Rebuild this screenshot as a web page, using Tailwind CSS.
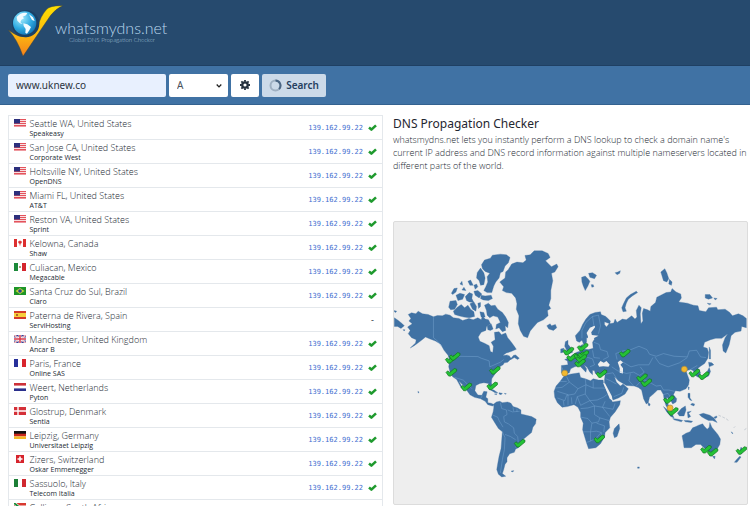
<!doctype html>
<html lang="en">
  <head>
    <meta charset="UTF-8" />
    <meta name="viewport" content="width=device-width, initial-scale=1.0" />
    <title>DNS Propagation Checker - whatsmydns.net</title>
    <script src="https://cdn.jsdelivr.net/npm/@tailwindcss/browser@4"></script>
  </head>
  <body class="bg-white font-['Open_Sans',sans-serif] text-[#232a33]">
    <!-- shared icons -->
    <svg class="hidden" aria-hidden="true">
      <symbol id="tick" viewBox="0 0 9 7">
        <path d="M1 3.6 3.4 5.6 8 1.4" fill="none" stroke="#1f9a2e" stroke-width="2.6" stroke-linejoin="round" />
      </symbol>
      <symbol id="pin" viewBox="-16 -13 32 26" overflow="visible">
        <path d="M-16 1 L-11 -4 L-5 1 L9 -11 L16 -9 L16 -3 L-2 12 L-8 12 Z" fill="#24c136" stroke="#11701f" stroke-width="2" stroke-linejoin="round" />
      </symbol>
      <symbol id="us" viewBox="0 0 12 8">
        <path fill="#f7dfe1" d="M0 0h12v8H0z" />
        <path stroke="#e4535c" d="M0 .5h12M0 2.5h12M0 4.5h12M0 6.5h12" />
        <path fill="#e4535c" d="M0 7.5h12V8H0z" />
        <path fill="#2c2f7c" d="M0 0h6v4.5H0z" />
      </symbol>
      <symbol id="ca" viewBox="0 0 12 8">
        <path fill="#fff" d="M0 0h12v8H0z" />
        <path fill="#dc2f2f" d="M0 0h3v8H0zM9 0h3v8H9zM6 1.2l.8 1 1.2.3-.6 1.8-1 .5v1.7h-.8V4.8l-1-.5L4 2.5l1.2-.3z" />
      </symbol>
      <symbol id="mx" viewBox="0 0 12 8">
        <path fill="#fff" d="M0 0h12v8H0z" />
        <path fill="#1c8a3a" d="M0 0h4v8H0z" />
        <path fill="#d4252d" d="M8 0h4v8H8z" />
        <circle cx="6" cy="4" r="1" fill="#8a7a4a" />
      </symbol>
      <symbol id="br" viewBox="0 0 12 8">
        <path fill="#1d9528" d="M0 0h12v8H0z" />
        <path fill="#c8d23a" d="M6 1l4.5 3L6 7 1.5 4z" />
        <circle cx="6" cy="4" r="1.8" fill="#23449a" />
      </symbol>
      <symbol id="es" viewBox="0 0 12 8">
        <path fill="#d43a2a" d="M0 0h12v8H0z" />
        <path fill="#f7cf3c" d="M0 2h12v4H0z" />
        <path fill="#b5642c" d="M2 3h2v2H2z" />
      </symbol>
      <symbol id="gb" viewBox="0 0 12 8">
        <path fill="#3a3f93" d="M0 0h12v8H0z" />
        <path stroke="#fff" stroke-width="1.6" d="M0 0l12 8M12 0L0 8" />
        <path stroke="#d8394a" stroke-width=".6" d="M0 0l12 8M12 0L0 8" />
        <path stroke="#fff" stroke-width="2.8" d="M6 0v8M0 4h12" />
        <path stroke="#d8394a" stroke-width="1.5" d="M6 0v8M0 4h12" />
      </symbol>
      <symbol id="fr" viewBox="0 0 12 8">
        <path fill="#fff" d="M0 0h12v8H0z" />
        <path fill="#27309a" d="M0 0h4v8H0z" />
        <path fill="#d8252d" d="M8 0h4v8H8z" />
      </symbol>
      <symbol id="nl" viewBox="0 0 12 8">
        <path fill="#fff" d="M0 0h12v8H0z" />
        <path fill="#cc3038" d="M0 0h12v2.6H0z" />
        <path fill="#2a2f8c" d="M0 5.4h12V8H0z" />
      </symbol>
      <symbol id="dk" viewBox="0 0 12 8">
        <path fill="#d43038" d="M0 0h12v8H0z" />
        <path stroke="#fff" stroke-width="1.4" d="M4 0v8M0 4h12" />
      </symbol>
      <symbol id="de" viewBox="0 0 12 8">
        <path fill="#111" d="M0 0h12v3H0z" />
        <path fill="#c8281e" d="M0 2.7h12v2.7H0z" />
        <path fill="#f3b825" d="M0 5.4h12V8H0z" />
      </symbol>
      <symbol id="ch" viewBox="0 0 12 8">
        <path fill="#d6242c" d="M2 0h8v8H2z" />
        <path stroke="#fff" stroke-width="1.6" d="M6 1.5v5M3.5 4h5" />
      </symbol>
      <symbol id="it" viewBox="0 0 12 8">
        <path fill="#fff" d="M0 0h12v8H0z" />
        <path fill="#1c7f36" d="M0 0h4v8H0z" />
        <path fill="#d0282f" d="M8 0h4v8H8z" />
      </symbol>
      <symbol id="za" viewBox="0 0 12 8">
        <path fill="#d8392f" d="M0 0h12v4H0z" />
        <path fill="#27309a" d="M0 4h12v4H0z" />
        <path stroke="#fff" stroke-width="3" fill="none" d="M0 0l5 4h7M0 8l5-4" />
        <path stroke="#1c8a3a" stroke-width="1.8" fill="none" d="M0 0l5 4h7M0 8l5-4" />
      </symbol>
    </svg>

    <header class="h-[66px] bg-[#264a6e] border-b border-[#1f4063] pl-2 pt-1">
      <a href="/" class="flex w-fit">
        <svg class="w-[56px] h-[54px]" viewBox="24 12 168 162" aria-hidden="true">
          <defs>
            <linearGradient id="gold" x1="0" y1="0" x2="0" y2="1">
              <stop offset="0" stop-color="#fde000" />
              <stop offset=".55" stop-color="#fdbb10" />
              <stop offset="1" stop-color="#f4801c" />
            </linearGradient>
            <radialGradient id="ocean" cx=".35" cy=".3" r=".8">
              <stop offset="0" stop-color="#a5ecfd" />
              <stop offset=".55" stop-color="#2fabe2" />
              <stop offset="1" stop-color="#0f6cae" />
            </radialGradient>
          </defs>
          <path d="M25 90 L40 100 Q58 113 80 110 Q106 102 114 80 Q120 50 140 28 Q150 16 188 17 Q166 27 152 46 Q118 96 69 169 Q52 118 25 90Z" fill="url(#gold)" stroke="#3c4440" stroke-width="1.5" />
          <circle cx="77" cy="71" r="41" fill="#1b4166" />
          <circle cx="74" cy="69" r="35" fill="url(#ocean)" />
          <path d="M50 51 Q64 35 82 39 L78 46 L68 50 L72 55 L64 59 L61 67 L68 72 L60 70 L52 62ZM70 70 L82 73 L93 81 L88 91 L81 101 L76 99 L77 87 L71 78ZM87 43 L99 52 L104 63 L96 60 L91 51Z" fill="#f2fbff" />
        </svg>
        <span class="flex flex-col pt-[15px] -ml-[9px] font-['Lato',sans-serif] font-light text-[#b9d6ec]">
          <span class="text-[16px] leading-[18px]">whatsmydns.net</span>
          <span class="text-[6px] leading-[6px] pl-[14px] text-[#a3c1da]">Global DNS Propagation Checker</span>
        </span>
      </a>
    </header>

    <form class="h-[39px] bg-[#4072a4] border-b border-[#33618f] flex items-center gap-[3px] pl-2 font-['Noto_Sans',sans-serif] text-[10px] text-[#2b3440]">
      <input type="text" aria-label="Domain name" value="www.uknew.co" class="w-[158px] h-[23px] rounded-xs bg-[#e8f0fe] px-2 text-[10px]" />
      <span class="relative">
        <select aria-label="Record type" class="block w-[59px] h-[23px] rounded-xs bg-white pl-2 appearance-none text-[#4a525c]">
          <option>A</option>
          <option>AAAA</option>
          <option>CNAME</option>
          <option>MX</option>
        </select>
        <svg class="absolute right-[6px] top-[9px] w-[6px] h-[6px] pointer-events-none" viewBox="0 0 6 6" aria-hidden="true">
          <path d="M.7 1.5 3 3.900 5.300 1.500" fill="none" stroke="#222" stroke-width="1.300" />
        </svg>
      </span>
      <button type="button" aria-label="Settings" class="w-[28px] h-[23px] rounded-xs bg-white grid place-items-center">
        <svg class="w-[10px] h-[10px]" viewBox="0 0 22 22" aria-hidden="true">
          <circle cx="11" cy="11" r="6" fill="none" stroke="#26323f" stroke-width="5" />
          <path d="M11 0v4M11 18v4M0 11h4M18 11h4M3 3l3 3M16 16l3 3M19 3l-3 3M6 16l-3 3" stroke="#26323f" stroke-width="4" />
        </svg>
      </button>
      <button type="submit" class="w-[64px] h-[23px] rounded-xs bg-[#ccdae9] flex items-center justify-center gap-1 font-semibold text-[#25405f]">
        <svg class="w-[13px] h-[13px]" viewBox="0 0 13 13" aria-hidden="true">
          <circle cx="6.500" cy="6.500" r="5" fill="none" stroke="#9fb0c2" stroke-width="2" />
          <path d="M6.500 1.500a5 5 0 0 1 3.500 8.500" fill="none" stroke="#4a6583" stroke-width="2" />
        </svg>
        Search
      </button>
    </form>

    <main class="grid grid-cols-[375fr_355fr] gap-[10px] items-start pl-2 pr-[2px] pt-[10px]">
      <table class="w-full border border-[#e4e8ec]">
        <tbody id="servers"></tbody>
      </table>

      <section>
        <h1 class="font-['Noto_Sans',sans-serif] text-[12px] leading-[18px] text-[#1f2630]">DNS Propagation Checker</h1>
        <p class="text-[9px] leading-[13px] font-light">
          whatsmydns.net lets you instantly perform a DNS lookup to check a domain name's current IP address and DNS record information against multiple nameservers located in different parts of the world.
        </p>
        <div class="mt-[49px] rounded-xs border border-[#dcdcdc] bg-[#eeeeee] overflow-hidden">
          <svg class="block w-full" viewBox="9 -57 1065 852" role="img" aria-label="World map of DNS servers">
            <g fill="#4072a4" stroke="#4072a4" stroke-width="1" stroke-linejoin="round">
              <!-- North America -->
              <path d="M52 222 L62 217 L75 220 L82 212 L95 220 L112 222 L128 229 L140 225 L155 226 L165 221 L178 224 L188 232 L205 234 L216 240 L235 234 L248 238 L262 232 L272 238 L276 226 L284 236 L294 238 L300 250 L288 258 L286 270 L272 276 L263 290 L268 303 L282 309 L296 316 L300 334 L307 337 L309 318 L302 306 L314 298 L312 276 L326 274 L333 283 L346 278 L352 292 L362 304 L372 318 L378 327 L362 334 L348 338 L337 346 L352 344 L350 352 L362 356 L352 366 L342 368 L338 374 L328 380 L320 393 L312 404 L304 416 L303 428 L306 444 L300 446 L294 430 L280 428 L268 430 L256 436 L253 452 L262 465 L274 466 L280 454 L290 455 L286 472 L292 476 L292 488 L302 490 L312 494 L306 498 L292 494 L284 484 L270 476 L252 472 L238 464 L228 450 L216 434 L204 422 L218 446 L212 444 L198 418 L186 410 L178 396 L174 380 L177 360 L172 345 L160 330 L150 312 L134 302 L118 296 L104 290 L94 298 L84 306 L70 316 L58 323 L74 308 L76 298 L62 292 L52 280 L58 270 L50 260 L64 250 L54 242 L60 234Z" />
              <path d="M344 350 L356 346 L362 354 L370 345 L376 344 L387 354 L382 358 L372 352 L362 358 L352 356Z" />
              <!-- Aleutians and eastern tip of Siberia -->
              <path d="M10 232 L22 240 L34 250 L40 256 L30 264 L20 258 L10 258ZM10 210 L17 212 L14 216 L10 214ZM36 268 L42 268 L40 272Z" />
              <!-- Arctic islands -->
              <path d="M273 72 L282 58 L300 52 L306 43 L330 40 L348 42 L359 50 L354 66 L344 76 L338 92 L330 96 L326 112 L316 124 L310 136 L304 156 L290 156 L280 150 L286 138 L292 124 L290 108 L298 98 L284 92 L276 84Z" />
              <path d="M260 96 L270 82 L280 96 L284 112 L280 132 L270 134 L266 120 L258 112Z" />
              <path d="M272 164 L284 166 L302 164 L306 174 L294 180 L278 178 L270 174Z" />
              <path d="M250 152 L262 150 L274 160 L266 172 L254 164Z" />
              <path d="M224 168 L236 156 L246 160 L244 174 L250 186 L236 184 L228 180Z" />
              <path d="M196 164 L208 158 L222 162 L216 176 L202 180Z" />
              <path d="M182 158 L190 144 L200 142 L196 154 L186 162ZM208 130 L214 122 L216 134ZM214 148 L220 140 L226 150ZM232 122 L240 118 L248 134 L238 134ZM250 134 L258 130 L262 138 L254 146Z" />
              <path d="M174 200 L178 182 L196 180 L200 192 L192 206 L180 208Z" />
              <path d="M188 212 L200 200 L212 192 L222 202 L232 194 L240 206 L250 214 L252 228 L236 232 L220 230 L204 226 L192 222Z" />
              <path d="M238 190 L250 184 L258 198 L256 212 L246 206ZM262 188 L270 186 L270 198 L264 204Z" />
              <path d="M282 194 L294 188 L302 196 L314 194 L322 206 L336 216 L346 230 L354 246 L352 262 L344 256 L346 270 L336 274 L326 262 L316 266 L318 252 L330 246 L322 230 L308 226 L298 232 L290 224 L288 210Z" />
              <path d="M290 256 L302 250 L308 266 L300 270 L292 268ZM268 214 L280 216 L284 230 L272 230Z" />
              <!-- Greenland, Iceland -->
              <path d="M328 124 L344 112 L346 94 L354 86 L364 70 L380 64 L398 66 L408 58 L404 44 L420 42 L432 30 L456 30 L474 38 L480 50 L466 60 L474 68 L484 78 L500 70 L504 78 L494 94 L484 98 L488 120 L482 150 L482 174 L476 194 L482 204 L472 210 L474 226 L460 238 L442 246 L430 260 L420 272 L412 292 L400 288 L390 270 L384 250 L386 226 L378 206 L380 190 L376 172 L364 158 L348 156 L336 150 L340 138Z" />
              <path d="M470 256 L480 250 L484 256 L496 252 L500 262 L490 270 L476 266Z" />
              <!-- Caribbean, Hawaii -->
              <path d="M294 446 L310 450 L322 458 L314 458ZM312 462 L320 461 L318 464ZM326 458 L336 460 L332 464 L326 462ZM342 460 L348 461 L344 463ZM81 454 L85 457 L82 459Z" />
              <!-- South America -->
              <path d="M310 492 L318 486 L328 484 L336 488 L352 486 L362 490 L368 500 L382 504 L392 510 L392 522 L408 526 L424 530 L438 538 L436 552 L428 562 L424 578 L412 588 L400 598 L394 612 L384 624 L376 628 L372 638 L358 642 L350 654 L350 666 L344 674 L340 690 L336 702 L346 710 L334 712 L324 704 L319 690 L322 672 L326 650 L332 626 L334 600 L336 576 L324 566 L314 550 L303 532 L308 516 L310 504Z" />
              <path d="M362 695 L370 693 L368 697Z" />
              <g transform="translate(510 30)">
                <!-- Svalbard, Novaya Zemlya, Arctic Russia -->
                <path d="M65 80 L76 76 L84 84 L90 92 L84 106 L76 120 L70 106 L66 94ZM86 68 L98 66 L110 74 L104 84 L90 80ZM94 102 L100 102 L102 108 L96 110ZM166 66 L174 64 L182 60 L180 68 L172 72Z" />
                <path d="M190 184 L186 172 L192 158 L200 142 L212 132 L230 122 L234 126 L218 136 L206 146 L200 158 L196 172 L200 182Z" />
                <path d="M304 64 L316 54 L322 66 L328 84 L322 94 L312 90ZM330 86 L338 94 L336 104 L328 100ZM438 132 L452 132 L460 142 L448 146 L438 142ZM464 142 L474 144 L468 148ZM444 158 L456 160 L450 163Z" />
                <!-- Europe and Asia -->
                <path d="M50 272 L46 256 L60 240 L68 222 L78 206 L90 192 L106 186 L122 184 L124 192 L138 198 L152 212 L150 220 L134 214 L134 222 L140 230 L148 220 L162 218 L166 206 L172 216 L188 206 L200 208 L216 196 L226 206 L232 200 L230 180 L238 164 L245 172 L242 190 L244 220 L250 212 L248 188 L252 174 L264 178 L272 182 L274 168 L288 156 L292 140 L304 134 L320 126 L334 124 L338 114 L350 124 L364 130 L366 142 L358 154 L384 158 L402 164 L416 166 L420 180 L440 184 L448 172 L472 170 L476 178 L498 176 L512 186 L520 196 L538 190 L552 196 L562 204 L562 232 L548 228 L546 242 L528 246 L516 256 L514 266 L510 284 L500 308 L492 302 L490 284 L498 262 L506 250 L488 264 L470 264 L454 268 L436 276 L432 290 L444 294 L448 306 L446 324 L436 340 L424 348 L416 354 L424 368 L418 382 L408 376 L402 362 L394 358 L380 362 L384 374 L390 390 L388 404 L380 416 L362 424 L348 422 L342 434 L352 446 L350 456 L340 462 L334 452 L322 442 L322 456 L330 470 L338 484 L332 484 L320 468 L314 450 L312 434 L304 420 L294 420 L284 430 L270 442 L266 458 L260 462 L252 446 L246 420 L236 412 L224 408 L200 406 L190 400 L176 392 L164 380 L170 396 L182 408 L190 402 L206 416 L196 432 L176 444 L160 450 L152 444 L144 424 L134 404 L134 388 L136 374 L120 374 L106 370 L104 362 L98 360 L98 374 L90 366 L82 352 L72 344 L80 356 L78 366 L70 358 L58 346 L44 350 L32 356 L28 368 L12 374 L4 368 L4 346 L24 344 L22 332 L14 328 L28 322 L40 312 L50 306 L62 302 L60 288 L68 282 L68 296 L86 298 L100 294 L98 276 L104 266 L96 262 L80 262 L80 276 L72 284 L66 270 L58 276Z" />
                <!-- Britain and Ireland -->
                <path d="M16 274 L24 270 L24 282 L32 292 L38 306 L24 312 L14 312 L20 300 L14 288ZM2 296 L12 294 L10 306 L2 308Z" />
                <!-- Africa, Madagascar -->
                <path d="M12 378 L30 372 L58 368 L62 382 L76 386 L92 392 L100 386 L116 390 L130 390 L132 404 L142 426 L154 446 L158 456 L182 452 L180 464 L166 486 L152 502 L148 516 L150 534 L136 548 L134 562 L122 582 L108 594 L86 597 L80 580 L74 560 L68 540 L70 520 L62 502 L62 488 L54 472 L42 464 L22 470 L6 472 L-8 458 L-16 442 L-18 424 L-12 408 L0 394Z" />
                <path d="M164 536 L178 522 L180 536 L172 560 L164 564 L160 550ZM234 652 L239 652 L239 656 L234 656ZM266 458 L272 462 L270 468 L266 466Z" />
                <!-- Japan, Sakhalin, Taiwan, Philippines -->
                <path d="M450 290 L454 300 L454 326 L450 326ZM448 336 L458 338 L464 344 L450 350ZM450 352 L454 364 L448 378 L430 386 L422 384 L440 372ZM386 410 L390 412 L388 420ZM386 430 L392 430 L392 444 L398 452 L392 450 L386 442ZM398 460 L406 462 L404 468 L394 464Z" />
                <!-- Indonesia, New Guinea -->
                <path d="M312 470 L326 482 L340 496 L344 504 L334 500 L322 486ZM340 506 L356 508 L370 512 L366 516 L344 510ZM354 490 L366 476 L378 468 L380 480 L374 498 L360 498ZM384 486 L396 484 L388 490 L394 500 L386 504ZM374 512 L386 512 L400 514 L396 518 L378 516ZM420 494 L432 490 L452 496 L464 504 L474 518 L460 512 L448 512 L436 506 L426 500ZM464 502 L472 498 L474 502 L468 506Z" />
                <!-- Australia, New Zealand -->
                <path d="M368 558 L380 550 L392 546 L400 534 L410 530 L418 526 L430 522 L436 530 L444 538 L450 532 L452 518 L458 532 L466 542 L476 554 L484 568 L482 584 L474 598 L462 608 L446 606 L434 594 L424 584 L410 584 L396 594 L374 594 L372 578ZM460 620 L468 620 L466 628ZM546 592 L552 602 L548 612 L540 612ZM542 620 L546 622 L534 638 L526 638 L532 630ZM516 546 L522 550 L520 552Z" />
                <path d="M478 496 L492 502 L504 508 L510 516 M524 534 L528 530 M556 540 L562 536" fill="none" stroke="#c5cbd2" stroke-width="3" stroke-dasharray="8 5" />
              </g>
            </g>

            <!-- inland seas -->
            <g transform="translate(510 30)" fill="#eeeeee">
              <path d="M84 258 L80 248 L90 232 L104 226 L106 230 L94 246 L96 254 L116 256 L104 262 L98 272 L86 278Z" />
              <path d="M114 342 L122 332 L132 338 L140 332 L150 344 L146 350 L130 348 L118 350Z" />
              <path d="M174 336 L182 330 L190 336 L182 344 L190 354 L190 370 L180 368 L180 354Z" />
              <path d="M130 398 L136 400 L156 438 L159 452 L150 446Z" />
            </g>

            <!-- country borders -->
            <g fill="none" stroke="#82b0dc" stroke-width="1.2" stroke-linejoin="round">
              <path d="M128 230 L128 292 L142 304 L152 318 M180 348 L262 349 L272 354 L296 362 L298 380 L330 366 L340 358 M192 412 L218 420 L230 432 L244 446 M270 476 L276 466" />
              <path d="M330 488 L334 506 L348 510 L350 524 L340 530 L342 546 L354 552 L370 564 L372 580 L382 590 L384 608 L376 624 M308 526 L322 532 L326 542 L338 562 M336 576 L344 594 L342 630 L336 660 L330 700 M352 510 L366 516 L388 514 M344 584 L360 590 L376 600 M368 502 L370 514 M380 506 L380 516" />
              <g transform="translate(510 30)">
                <path d="M66 264 L66 240 L78 216 L98 198 L102 226 M98 198 L116 194 L122 226 L116 250 M102 276 L118 282 L122 298 L142 304 L146 320 L130 328 M80 300 L78 320 L98 326 L104 344 L90 350 M40 314 L54 326 L50 344 M98 300 L102 322 L120 324 M6 352 L12 370" />
                <path d="M172 328 L168 310 L190 302 L214 298 L238 288 L262 298 L270 312 L290 318 L312 310 L344 318 L384 320 L390 302 L412 300 L424 320 L440 322 M286 320 L300 340 L326 350 L360 338 L384 322 M190 336 L214 350 L236 344 L268 344 L280 322 M156 350 L174 362 L200 370 L222 366 L240 376 L254 366 L242 350 M136 372 L160 368 L172 388 M212 370 L208 392 L222 408 M230 408 L248 388 L262 392 L290 408 L304 406 L312 420 L328 420 L346 424 M138 386 L152 392 L170 402 M162 440 L186 430 L192 412 M310 434 L326 430 L338 450 M390 360 L414 346" />
                <path d="M-16 414 L6 412 L28 396 L20 380 M28 396 L54 416 L78 404 L76 386 M54 416 L44 432 L20 436 L14 452 L-8 444 M78 404 L100 414 L100 392 M100 414 L136 414 M78 404 L76 432 L52 440 L46 462 M76 432 L90 452 L112 450 L130 442 L144 432 M52 440 L62 466 L90 452 L104 468 L128 472 L136 454 M62 476 L84 474 L104 468 L104 494 L120 504 L148 512 M64 502 L84 506 L96 520 L92 546 L70 546 M96 520 L116 516 L120 504 M92 546 L92 574 L80 578 M92 546 L110 544 L124 548 L128 562 M92 574 L110 564 L124 548 M128 472 L150 500 M128 472 L160 478 L166 460 M-8 424 L24 434 L24 466 M0 394 L20 394 M10 452 L12 468 M34 442 L36 462 M110 520 L134 528 L132 546" />
              </g>
            </g>
            <g id="pins"></g>
          </svg>
        </div>
      </section>
    </main>

    <script>
    const ip = "139.162.99.22"

    const servers = [
      ["us", "Seattle WA, United States", "Speakeasy", ip],
      ["us", "San Jose CA, United States", "Corporate West", ip],
      ["us", "Holtsville NY, United States", "OpenDNS", ip],
      ["us", "Miami FL, United States", "AT&amp;T", ip],
      ["us", "Reston VA, United States", "Sprint", ip],
      ["ca", "Kelowna, Canada", "Shaw", ip],
      ["mx", "Culiacan, Mexico", "Megacable", ip],
      ["br", "Santa Cruz do Sul, Brazil", "Claro", ip],
      ["es", "Paterna de Rivera, Spain", "ServiHosting", null],
      ["gb", "Manchester, United Kingdom", "Ancar B", ip],
      ["fr", "Paris, France", "Online SAS", ip],
      ["nl", "Weert, Netherlands", "Pyton", ip],
      ["dk", "Glostrup, Denmark", "Sentia", ip],
      ["de", "Leipzig, Germany", "Universitaet Leipzig", ip],
      ["ch", "Zizers, Switzerland", "Oskar Emmenegger", ip],
      ["it", "Sassuolo, Italy", "Telecom Italia", ip],
      ["za", "Cullinan, South Africa", "Liquid Telecom", ip],
    ]

    document.querySelector("#servers").innerHTML = servers.map(([flag, place, host, result]) => `
      <tr class="h-[24px] border-b border-[#e4e8ec]">
        <td class="w-[21px] pl-[5px] pt-[3px] align-top">
          <svg class="w-[12px] h-[8px]" aria-hidden="true"><use href="#${flag}" /></svg>
        </td>
        <td class="align-top">
          <div class="text-[9px] leading-[10px] pt-[3px] font-light">${place}</div>
          <div class="text-[7px] leading-[10px]">${host}</div>
        </td>
        <td class="pr-[5px] text-right">
          ${result
            ? `<div class="flex items-center justify-end gap-[5px] text-[7px] leading-[10px] font-['DejaVu_Sans_Mono',monospace] text-[#3f6fd0]">
                 <a href="#">${result}</a>
                 <svg class="w-[9px] h-[7px]" aria-hidden="true"><use href="#tick" /></svg>
               </div>`
            : `<div class="text-[9px] leading-[10px] pr-[3px]">-</div>`}
        </td>
      </tr>`).join("")

    // map positions: resolved servers, then servers without an answer
    const resolved = [
      [180, 357], [192, 348], [182, 396], [313, 390], [227, 440], [305, 437], [388, 610],
      [535, 332], [546, 350], [578, 320], [568, 346], [580, 342], [574, 354], [570, 368],
      [705, 338], [635, 400], [757, 412], [770, 427], [915, 398], [943, 406],
      [838, 478], [850, 514], [628, 597], [950, 628], [970, 637], [1057, 632],
    ]
    const missing = [[524, 399], [885, 387], [842, 504]]

    document.querySelector("#pins").innerHTML =
      resolved.map(([x, y]) => `<use href="#pin" x="${x - 16}" y="${y - 13}" width="32" height="26" />`).join("") +
      missing.map(([x, y]) => `<circle cx="${x}" cy="${y}" r="9" fill="#f3b92f" stroke="#a98a3f" stroke-width="2" />`).join("")
    </script>
  </body>
</html>
